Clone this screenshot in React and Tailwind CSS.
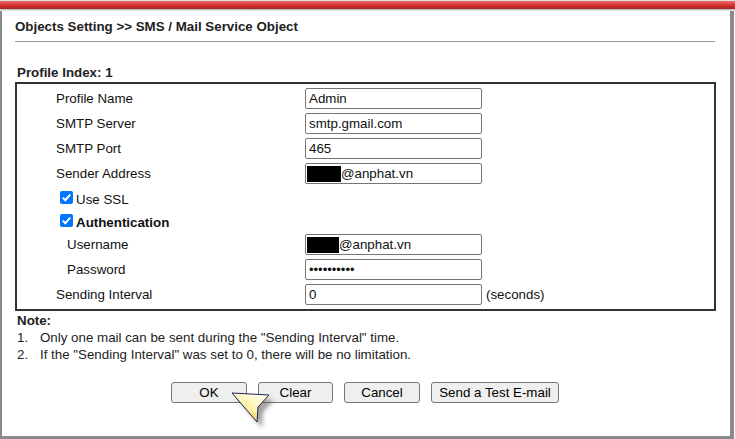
const font = { fontFamily: '"Liberation Sans", Arial, sans-serif' };

function Row({ label, indent = false, children }) {
  return (
    <div className="flex h-[21px] items-center">
      <div className={indent ? "w-[288px] pl-[50px] text-[13.33px] leading-none" : "w-[288px] pl-[39px] text-[13.33px] leading-none"}>
        {label}
      </div>
      {children}
    </div>
  );
}

function Field({ value, mask, type = "text" }) {
  return (
    <div className="flex h-[21px] w-[177px] items-center overflow-hidden rounded-[2px] border border-[#767676] bg-white pl-[3px] text-[13.33px] leading-none text-[#111]">
      {mask ? <span className="-ml-[2px] h-[16px] bg-black" style={{ width: mask }} /> : null}
      {type === "password" ? <span className="text-[13px]">••••••••••</span> : <span>{value}</span>}
    </div>
  );
}

function Check({ label, bold }) {
  return (
    <div className="flex h-[13px] items-center pl-[43px]">
      <div className="flex h-[13px] w-[13px] items-center justify-center rounded-[2px] bg-[#0075ff]">
        <svg width="11" height="11" viewBox="0 0 11 11" fill="none">
          <path d="M1.8 5.6 L4.3 8.2 L9.2 2.6" stroke="white" strokeWidth="2" />
        </svg>
      </div>
      <span className={bold ? "ml-[3px] mt-[5px] text-[13.33px] font-bold leading-none" : "ml-[3px] mt-[5px] text-[13.33px] leading-none"}>{label}</span>
    </div>
  );
}

function Btn({ children, className }) {
  return (
    <button className={"flex h-[21px] items-center justify-center rounded-[3px] border border-[#767676] bg-[#efefef] text-[13.33px] leading-none text-black " + className}>
      {children}
    </button>
  );
}

export default function App() {
  return (
    <div style={font} className="relative flex h-[439px] w-[735px] flex-col overflow-hidden bg-white text-[#111]">
      <div className="h-[1px] shrink-0 bg-[#e0e0e0]" />
      <div className="h-[8px] shrink-0 bg-gradient-to-b from-[#ee6a68] via-[#d93532] to-[#a32220]" />
      <div className="h-[2px] shrink-0 bg-gradient-to-b from-[#b5b5b5] to-[#efefef]" />
      <div className="mr-[1px] flex min-h-0 flex-1 flex-col border-r-[4px] border-b-[3px] border-l-[2px] border-r-[#8a8a8a] border-b-[#8a8a8a] border-l-[#8a8a8a] pl-[13px] pr-[14px]">
        <div className="pt-[8px] text-[13.33px] font-bold leading-[15px] text-[#222]">
          Objects Setting &gt;&gt; SMS / Mail Service Object
        </div>
        <div className="mt-[7px] h-[1px] w-[700px] bg-[#999]" />
        <div className="mt-[23px] pl-[2px] text-[13.33px] font-bold leading-[15px] text-[#222]">Profile Index: 1</div>
        <div className="mt-[2px] flex h-[229px] w-[701px] flex-col border-2 border-[#333] pt-[4px]">
          <div className="flex flex-col gap-[4px]">
            <Row label="Profile Name"><Field value="Admin" /></Row>
            <Row label="SMTP Server"><Field value="smtp.gmail.com" /></Row>
            <Row label="SMTP Port"><Field value="465" /></Row>
            <Row label="Sender Address"><Field value="@anphat.vn" mask={34} /></Row>
          </div>
          <div className="mt-[7px]"><Check label="Use SSL" /></div>
          <div className="mt-[10px]"><Check label="Authentication" bold /></div>
          <div className="mt-[7px] flex flex-col gap-[4px]">
            <Row label="Username" indent><Field value="@anphat.vn" mask={32} /></Row>
            <Row label="Password" indent><Field type="password" /></Row>
            <div className="flex h-[21px] items-center">
              <div className="w-[288px] pl-[39px] text-[13.33px] leading-none">Sending Interval</div>
              <Field value="0" />
              <span className="ml-[4px] text-[13.33px] leading-none">(seconds)</span>
            </div>
          </div>
        </div>
        <div className="pl-[2px] pt-[1px] text-[13.33px] leading-[17px] text-[#222]">
          <div className="font-bold">Note:</div>
          <div className="flex"><span className="w-[23px]">1.</span><span>Only one mail can be sent during the "Sending Interval" time.</span></div>
          <div className="flex"><span className="w-[23px]">2.</span><span>If the "Sending Interval" was set to 0, there will be no limitation.</span></div>
        </div>
        <div className="mt-[19px] flex pl-[156px]">
          <Btn className="w-[76px]">OK</Btn>
          <Btn className="ml-[11px] w-[75px]">Clear</Btn>
          <Btn className="ml-[11px] w-[76px]">Cancel</Btn>
          <Btn className="ml-[11px] w-[128px]">Send a Test E-mail</Btn>
        </div>
      </div>
      <svg className="absolute left-[228px] top-[388px]" width="52" height="46" viewBox="0 0 52 46">
        <defs>
          <linearGradient id="arrowFill" x1="0.75" y1="0.15" x2="0.35" y2="0.9">
            <stop offset="0" stopColor="#fffbe0" />
            <stop offset="0.55" stopColor="#fff3a8" />
            <stop offset="1" stopColor="#f4c84a" />
          </linearGradient>
          <filter id="arrowShadow" x="-30%" y="-30%" width="160%" height="160%">
            <feGaussianBlur stdDeviation="2.2" />
          </filter>
        </defs>
        <path d="M8 9 L46 12 L35 24 L34 40 Z" fill="#555" opacity="0.55" filter="url(#arrowShadow)" />
        <path d="M4 5 L41 7 L30 19 L29 34 Z" fill="url(#arrowFill)" stroke="#23235f" strokeWidth="1" strokeLinejoin="round" />
      </svg>
    </div>
  );
}
